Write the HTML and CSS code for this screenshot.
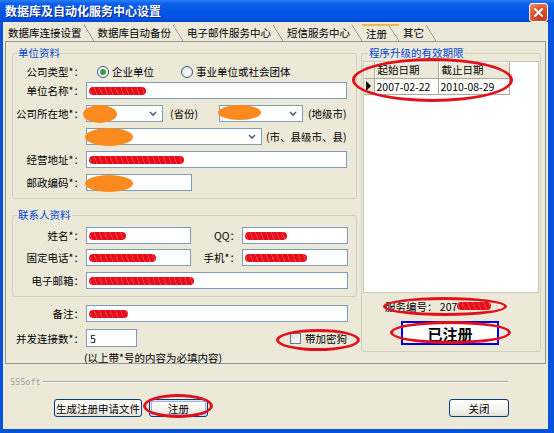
FILE: index.html
```html
<!DOCTYPE html>
<html lang="zh-CN">

<head>
    <meta charset="UTF-8">
    <title>数据库及自动化服务中心设置</title>
    <link rel="stylesheet" href="styles.css">
</head>

<body>
    <div class="window">
        <header class="titlebar">
            <span class="title">数据库及自动化服务中心设置</span>
            <span class="close">
                <svg width="11" height="11" viewBox="0 0 11 11">
                    <path d="M2 2 L9 9 M9 2 L2 9" stroke="#fff" stroke-width="2" stroke-linecap="round" />
                </svg>
            </span>
        </header>

        <div class="client">
            <nav class="tabs">
                <span class="tab">数据库连接设置</span>
                <span class="tab">数据库自动备份</span>
                <span class="tab">电子邮件服务中心</span>
                <span class="tab">短信服务中心</span>
                <span class="tab active">注册</span>
                <span class="tab">其它</span>
            </nav>

            <section class="page">
                <div class="left">
                    <fieldset class="group unit">
                        <legend>单位资料</legend>
                        <div class="row radios">
                            <label>公司类型*：</label>
                            <span class="radio checked"></span><span>企业单位</span>
                            <span class="radio second"></span><span>事业单位或社会团体</span>
                        </div>
                        <div class="row">
                            <label>单位名称*：</label>
                            <div class="edit long"><span class="scribble" style="--w:57px"></span></div>
                        </div>
                        <div class="row">
                            <label>公司所在地*：</label>
                            <div class="combo province">
                                <span class="blob"></span>
                                <svg width="8" height="6" viewBox="0 0 8 6"><path d="M1 1 L4 4 L7 1" fill="none" stroke="#4D6185" stroke-width="1.6" /></svg>
                            </div>
                            <span class="hint prov">(省份)</span>
                            <div class="combo city">
                                <span class="blob"></span>
                                <svg width="8" height="6" viewBox="0 0 8 6"><path d="M1 1 L4 4 L7 1" fill="none" stroke="#4D6185" stroke-width="1.6" /></svg>
                            </div>
                            <span class="hint">(地级市)</span>
                        </div>
                        <div class="row">
                            <label></label>
                            <div class="combo county">
                                <span class="blob"></span>
                                <svg width="8" height="6" viewBox="0 0 8 6"><path d="M1 1 L4 4 L7 1" fill="none" stroke="#4D6185" stroke-width="1.6" /></svg>
                            </div>
                            <span class="hint county-hint">(市、县级市、县)</span>
                        </div>
                        <div class="row">
                            <label>经营地址*：</label>
                            <div class="edit long"><span class="scribble" style="--w:95px"></span></div>
                        </div>
                        <div class="row">
                            <label>邮政编码*：</label>
                            <div class="edit zip"><span class="blob"></span></div>
                        </div>
                    </fieldset>

                    <fieldset class="group contact">
                        <legend>联系人资料</legend>
                        <div class="row">
                            <label>姓名*：</label>
                            <div class="edit half"><span class="scribble" style="--w:37px"></span></div>
                            <label class="second">QQ：</label>
                            <div class="edit half"><span class="scribble" style="--w:42px"></span></div>
                        </div>
                        <div class="row">
                            <label>固定电话*：</label>
                            <div class="edit half"><span class="scribble" style="--w:67px"></span></div>
                            <label class="second">手机*：</label>
                            <div class="edit half"><span class="scribble" style="--w:62px"></span></div>
                        </div>
                        <div class="row">
                            <label>电子邮箱：</label>
                            <div class="edit full"><span class="scribble" style="--w:105px"></span></div>
                        </div>
                    </fieldset>

                    <div class="row plain memo">
                        <label>备注：</label>
                        <div class="edit full"><span class="scribble" style="--w:39px"></span></div>
                    </div>
                    <div class="row plain conn">
                        <label>并发连接数*：</label>
                        <div class="edit num">5</div>
                        <span class="check"></span><span>带加密狗</span>
                    </div>
                    <p class="note">(以上带*号的内容为必填内容)</p>
                </div>

                <fieldset class="group period">
                    <legend>程序升级的有效期限</legend>
                    <div class="grid">
                        <table>
                            <tr>
                                <th class="ind"></th>
                                <th class="c1">起始日期</th>
                                <th class="c2">截止日期</th>
                            </tr>
                            <tr>
                                <td class="ind"><span class="arrow"></span></td>
                                <td>2007-02-22</td>
                                <td>2010-08-29</td>
                            </tr>
                        </table>
                    </div>
                    <div class="serial">服务编号：&nbsp;207<span class="scribble" style="--w:34px"></span></div>
                    <div class="registered">已注册</div>
                </fieldset>
            </section>

            <footer class="footer">
                <div class="brand">SSSoft</div>
                <div class="buttons">
                    <button class="btn apply">生成注册申请文件</button>
                    <button class="btn register">注册</button>
                    <button class="btn shut">关闭</button>
                </div>
            </footer>
        </div>

        <span class="mark m-grid"></span>
        <span class="mark m-serial"></span>
        <span class="mark m-done"></span>
        <span class="mark m-dog"></span>
        <span class="mark m-reg"></span>
    </div>
</body>

</html>
```

FILE: styles.css
```css
* {
    box-sizing: border-box;
}

body {
    margin: 0;
    font-family: "Noto Sans CJK SC", "Noto Sans", sans-serif;
    font-size: 10.5px;
    color: #000;
    background: #fff;
}

.window {
    position: relative;
    display: flex;
    flex-direction: column;
    width: 554px;
    height: 433px;
    background: #0853DB;
}

.titlebar {
    display: flex;
    align-items: center;
    justify-content: space-between;
    height: 22px;
    padding: 0 6px 0 5px;
    background: linear-gradient(#2C7CF5 0%, #0A5FEA 18%, #0055E5 50%, #0052E0 85%, #0346CF 100%);
}

.title {
    color: #fff;
    font-size: 12px;
    font-weight: bold;
    line-height: 22px;
    text-shadow: 1px 1px 0 #0B2A8C;
}

.close {
    display: flex;
    align-items: center;
    justify-content: center;
    width: 19px;
    height: 19px;
    margin-top: 3px;
    border: 1px solid #fff;
    border-radius: 3px;
    background: radial-gradient(circle at 70% 80%, #C4381B, #E0562E 55%, #F39A7C);
}

.client {
    flex: 1;
    display: flex;
    flex-direction: column;
    margin: 0 6px 4px 3px;
    background: #ECE9D8;
}

/* tabs */
.tabs {
    display: flex;
    align-items: flex-end;
    height: 19px;
    padding-left: 1px;
}

.tab {
    position: relative;
    height: 16px;
    line-height: 16px;
    padding: 0 12px 0 4px;
    white-space: nowrap;
}

.tab::after {
    content: "";
    position: absolute;
    top: 0;
    right: 0;
    bottom: 0;
    width: 10px;
    background: linear-gradient(to top right, transparent calc(50% - 0.7px), #8A8A80 50%, transparent calc(50% + 0.7px));
}

.tab.active {
    height: 17px;
    line-height: 15px;
    border-top: 2px solid #F5B54A;
}

/* tab page */
.page {
    display: flex;
    gap: 4px;
    height: 323px;
    margin: 0 2px;
    padding: 5px 4px 0 6px;
    border: 1px solid #919B9C;
}

.left {
    display: flex;
    flex-direction: column;
    width: 345px;
}

.group {
    margin: 0;
    padding: 0;
    min-width: 0;
    border: 1px solid #D0D0BF;
    border-radius: 3px;

    legend {
        margin-left: 4px;
        padding: 0 1px;
        color: #0046D5;
        line-height: 12px;
    }
}

.unit {
    height: 152px;
    padding-top: 4px;

    .row + .row {
        margin-top: 6px;
    }

    .radios + .row {
        margin-top: 2px;
    }
}

.contact {
    height: 88px;
    margin-top: 10px;
    padding-top: 6px;

    .row + .row {
        margin-top: 5px;
    }

    .row:last-child {
        margin-top: 6px;
    }
}

.row {
    display: flex;
    align-items: center;
    height: 17px;

    label {
        width: 71px;
        margin-right: 2px;
        text-align: right;
        white-space: nowrap;
    }

    label.second {
        width: 49px;
    }
}

.row.plain label {
    width: 72px;
}

.memo {
    margin-top: 8px;
}

.conn {
    height: 18px;
    margin-top: 7px;
}

.note {
    margin: 5px 0 0 72px;
    line-height: 11px;
}

/* controls */
.edit,
.combo {
    position: relative;
    display: flex;
    align-items: center;
    height: 17px;
    padding-left: 2px;
    background: #fff;
    border: 1px solid #7F9DB9;
}

.edit.long {
    width: 261px;
}

.edit.full {
    width: 262px;
}

.edit.zip {
    width: 106px;
}

.edit.half {
    width: 105px;
}

.edit.half:last-child {
    width: 106px;
}

.edit.num {
    width: 51px;
    height: 18px;
    padding-left: 3px;
}

.combo svg {
    margin-left: auto;
    margin-right: 5px;
}

.combo.province {
    width: 77px;
}

.combo.city {
    width: 84px;
}

.combo.county {
    width: 176px;
}

.hint {
    margin-left: 5px;
    white-space: nowrap;
}

.hint.prov {
    width: 56px;
    margin-left: 0;
    padding-left: 7px;
}

.hint.county-hint {
    margin-left: 4px;
}

.radio {
    width: 12px;
    height: 12px;
    margin: 0 3px 0 11px;
    border: 1px solid #2F5E8C;
    border-radius: 50%;
    background: radial-gradient(circle at 60% 60%, #FFFFFF, #DCDCD4);

    &.second {
        margin-left: 27px;
    }

    &.checked {
        background: radial-gradient(circle, #3E9A3A 0 2.5px, #9CCB93 3px, #FFFFFF 3.5px, #DCDCD4);
    }
}

.check {
    width: 11px;
    height: 11px;
    margin: 0 4px 0 153px;
    border: 1px solid #5D7A99;
    background: linear-gradient(135deg, #DCDCD7, #FFFFFF);
}

/* redactions */
.scribble {
    display: inline-block;
    width: var(--w);
    height: 8px;
    border-radius: 4px;
    background: repeating-linear-gradient(70deg, #E50E1A 0 2px, #F23A44 2px 3px, #E50E1A 3px 5px);
}

.blob {
    position: absolute;
    border-radius: 50%;
    background: #FB8A1F;
}

.province .blob {
    left: -4px;
    top: -1px;
    width: 34px;
    height: 18px;
}

.city .blob {
    left: -2px;
    top: -1px;
    width: 43px;
    height: 15px;
}

.county .blob {
    left: -2px;
    top: -1px;
    width: 48px;
    height: 18px;
}

.zip .blob {
    left: -2px;
    top: 0;
    width: 48px;
    height: 17px;
}

/* right group */
.period {
    width: 180px;
    height: 305px;

    legend {
        margin-left: 6px;
    }
}

.grid {
    height: 232px;
    margin: 2px 1px 0;
    background: #fff;
    border: 1px solid #C8C6B8;

    table {
        border-collapse: collapse;
        table-layout: fixed;
    }

    th,
    td {
        height: 16px;
        padding: 0 2px;
        font-weight: normal;
        text-align: left;
        line-height: 15px;
        border-right: 1px solid #ACA899;
        border-bottom: 1px solid #ACA899;
        white-space: nowrap;
    }

    th {
        background: #ECE9D8;
        box-shadow: inset 1px 1px #fff;
    }

    .ind {
        width: 10px;
        padding: 0;
        background: #ECE9D8;
    }

    .c1 {
        width: 64px;
        padding-left: 3px;
    }

    .c2 {
        width: 71px;
        padding-left: 3px;
    }
}

.arrow {
    display: block;
    width: 0;
    height: 0;
    margin-left: 2px;
    border-left: 5px solid #000;
    border-top: 5px solid transparent;
    border-bottom: 5px solid transparent;
}

.serial {
    display: flex;
    align-items: center;
    height: 12px;
    margin: 7px 0 0 23px;
    white-space: nowrap;
}

.registered {
    display: flex;
    align-items: center;
    justify-content: center;
    width: 98px;
    height: 24px;
    margin: 9px 0 0 39px;
    border: 2px solid #0000EE;
    background: #fff;
    font-size: 15px;
    font-weight: bold;
}

/* footer */
.footer {
    display: flex;
    flex-direction: column;
}

.brand {
    display: flex;
    align-items: center;
    gap: 2px;
    height: 12px;
    margin: 12px 40px 0 7px;
    color: #A0A0A0;
    font-family: "DejaVu Sans Mono", monospace;
    font-size: 8.5px;

    &::after {
        content: "";
        flex: 1;
        border-top: 1px solid #ACA899;
        border-bottom: 1px solid #fff;
    }
}

.buttons {
    display: flex;
    gap: 7px;
    margin: 11px 39px 0 51px;
}

.btn {
    display: flex;
    align-items: center;
    justify-content: center;
    height: 18px;
    padding: 0;
    font: inherit;
    color: #000;
    border: 1px solid #003C74;
    border-radius: 3px;
    background: linear-gradient(#FFFFFF, #F4F3EE 60%, #E3E1D6);

    &.apply {
        width: 88px;
    }

    &.register {
        width: 59px;
        box-shadow: inset 0 0 0 1px #CEE7FF, inset 0 0 0 2px #98B8EA;
    }

    &.shut {
        width: 60px;
        margin-left: auto;
    }
}

/* hand drawn marks over the screenshot */
.mark {
    position: absolute;
    border: 3px solid #E3101B;
    border-radius: 50%;
}

.m-grid {
    left: 352px;
    top: 58px;
    width: 161px;
    height: 44px;
}

.m-serial {
    left: 383px;
    top: 297px;
    width: 124px;
    height: 19px;
}

.m-done {
    left: 390px;
    top: 321px;
    width: 121px;
    height: 23px;
}

.m-dog {
    left: 276px;
    top: 329px;
    width: 84px;
    height: 22px;
}

.m-reg {
    left: 143px;
    top: 394px;
    width: 70px;
    height: 24px;
}
```
